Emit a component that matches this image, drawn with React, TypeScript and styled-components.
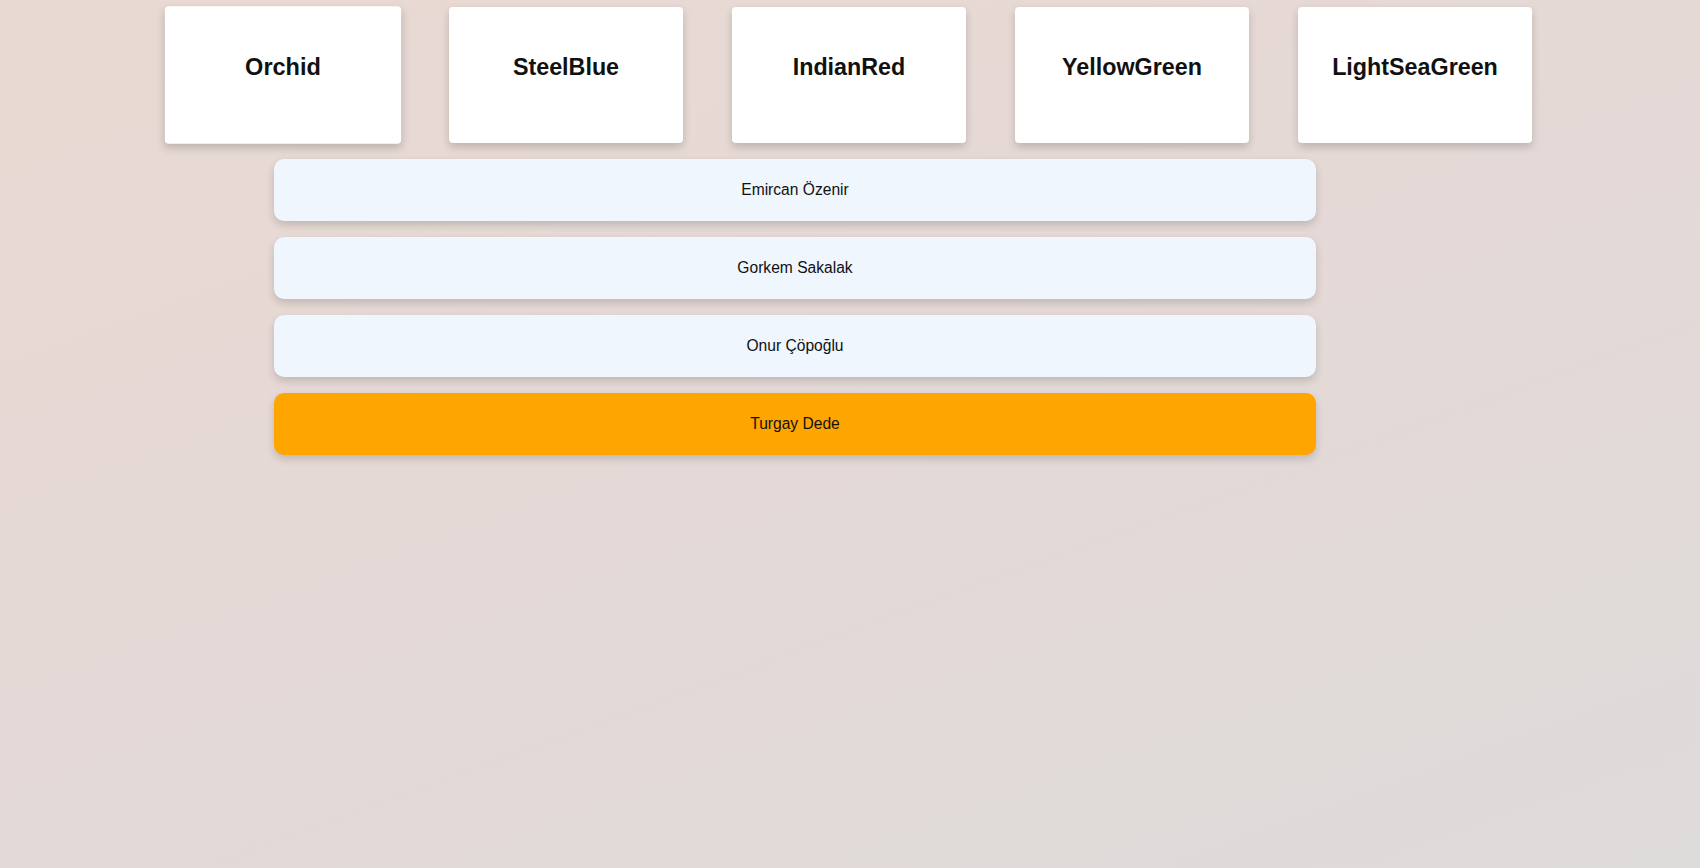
import React from "react";
import styled, { createGlobalStyle } from "styled-components";

const GlobalStyle = createGlobalStyle`
  html, body {
    margin: 0;
    padding: 0;
    height: 100%;
  }
  body {
    font-family: "Liberation Sans", Arial, sans-serif;
    background: linear-gradient(160deg, #e9d9d3 0%, #e5d9d6 45%, #dedbdb 100%);
    min-height: 868px;
  }
`;

const Page = styled.div`
  padding-top: 7px;
  display: flex;
  flex-direction: column;
  gap: 16px;
`;

const CardRow = styled.div`
  display: flex;
  gap: 49px;
  padding-left: 166px;
`;

const Card = styled.div<{ $active?: boolean }>`
  width: 234px;
  height: 136px;
  box-sizing: border-box;
  padding-top: 47px;
  background: #ffffff;
  border-radius: 4px;
  box-shadow: 0 4px 8px rgba(0, 0, 0, 0.18);
  text-align: center;
  transform: ${(p) => (p.$active ? "scale(1.01)" : "none")};
`;

const CardTitle = styled.h2`
  margin: 0;
  font-family: "Liberation Sans", Arial, sans-serif;
  font-weight: 700;
  font-size: 23.3px;
  color: #111111;
`;

const List = styled.div`
  display: flex;
  flex-direction: column;
  gap: 16px;
  padding-left: 274px;
`;

const Row = styled.div<{ $highlight?: boolean }>`
  width: 1042px;
  height: 62px;
  box-sizing: border-box;
  padding-bottom: 1px;
  display: flex;
  align-items: center;
  justify-content: center;
  background: ${(p) => (p.$highlight ? "#ffa500" : "#eff6fe")};
  border-radius: 10px;
  box-shadow: 0 4px 8px rgba(0, 0, 0, 0.16);
  font-family: "Liberation Sans", Arial, sans-serif;
  font-size: 15.6px;
  color: #111111;
`;

const colors = ["Orchid", "SteelBlue", "IndianRed", "YellowGreen", "LightSeaGreen"];
const people = ["Emircan Özenir", "Gorkem Sakalak", "Onur Çöpoğlu", "Turgay Dede"];

export default function App() {
  return (
    <>
      <GlobalStyle />
      <Page>
        <CardRow>
          {colors.map((c, i) => (
            <Card key={c} $active={i === 0}>
              <CardTitle>{c}</CardTitle>
            </Card>
          ))}
        </CardRow>
        <List>
          {people.map((p, i) => (
            <Row key={p} $highlight={i === people.length - 1}>
              {p}
            </Row>
          ))}
        </List>
      </Page>
    </>
  );
}
